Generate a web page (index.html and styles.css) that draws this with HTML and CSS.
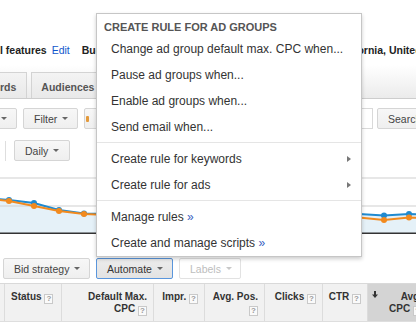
FILE: index.html
```html
<!DOCTYPE html>
<html>
<head>
<meta charset="utf-8">
<link rel="stylesheet" href="styles.css">
</head>
<body>
<div class="page">
  <div class="top-space"></div>
  <div class="info">
    <span class="strong">l features</span>
    <span class="link">Edit</span>
    <span class="strong budget">Budget: $50.00/day</span>
    <span class="strong location">Location: California, United States</span>
  </div>
  <div class="tabbar">
    <div class="tab tab-first">rds</div>
    <div class="tab tab-second">Audiences</div>
  </div>
  <div class="toolbar">
    <div class="btn btn-first"><span class="caret"></span></div>
    <div class="btn btn-filter">Filter<span class="caret"></span></div>
    <div class="btn btn-cols"><span class="col-icon"></span>Columns<span class="caret"></span></div>
    <div class="spacer"></div>
    <div class="search-input"></div>
    <div class="btn search-btn">Search</div>
  </div>
  <div class="toolbar2">
    <div class="vsep"></div>
    <div class="btn btn-daily">Daily<span class="caret"></span></div>
  </div>
  <svg class="chart" width="416" height="64" viewBox="0 0 416 64">
    <rect x="0" y="5.5" width="416" height="1" fill="#cfcfcf"/>
    <polygon fill="#e5f1f8" points="-16,26 9,28 34,31 59,38 84,41.5 109,42 134,40 159,41 184,39 209,40 234,41 259,42 284,40 309,41 334,42 359,42 384,43.5 409,42 434,43 434,61 -16,61"/>
    <rect x="0" y="33.5" width="416" height="1" fill="#cfcfcf"/>
    <rect x="0" y="60.5" width="416" height="1.5" fill="#333"/>
    <polyline fill="none" stroke="#1f8ad0" stroke-width="2" points="-16,26 9,28 34,31 59,38 84,41.5 109,42 134,40 159,41 184,39 209,40 234,41 259,42 284,40 309,41 334,42 359,42 384,43.5 409,42 434,43"/>
    <g fill="#1f8ad0">
      <circle cx="9" cy="28" r="3"/><circle cx="34" cy="31" r="3"/><circle cx="59" cy="38" r="3"/><circle cx="84" cy="41.5" r="3"/><circle cx="384" cy="43.5" r="3"/><circle cx="409" cy="42" r="3"/>
    </g>
    <polyline fill="none" stroke="#f28a1e" stroke-width="2" points="-16,26.5 9,29 34,34 59,39 84,42 109,43 134,42 159,43 184,41 209,42 234,43 259,44 284,42 309,44 334,45 359,45.5 384,48 409,45.5 434,46"/>
    <g fill="#f28a1e">
      <circle cx="9" cy="29" r="3"/><circle cx="34" cy="34" r="3"/><circle cx="59" cy="39" r="3"/><circle cx="84" cy="42" r="3"/><circle cx="384" cy="48" r="3"/><circle cx="409" cy="45.5" r="3"/>
    </g>
  </svg>
  <div class="toolbar3">
    <div class="btn btn-bid">Bid strategy<span class="caret"></span></div>
    <div class="btn btn-active">Automate<span class="caret"></span></div>
    <div class="btn btn-disabled">Labels<span class="caret"></span></div>
  </div>
  <div class="thead">
    <div class="th th-check"></div>
    <div class="th th-left">Status <span class="help">?</span></div>
    <div class="th">Default Max.<br>CPC <span class="help">?</span></div>
    <div class="th">Impr. <span class="help">?</span></div>
    <div class="th">Avg. Pos.<br><span class="help">?</span></div>
    <div class="th">Clicks <span class="help">?</span></div>
    <div class="th">CTR <span class="help">?</span></div>
    <div class="th th-sorted"><svg class="sort-arrow" width="6" height="7" viewBox="0 0 6 7"><rect x="2" y="0" width="2" height="4" fill="#333"/><polygon points="0,3.5 6,3.5 3,7" fill="#333"/></svg>Avg.<br>CPC <span class="help">?</span></div>
  </div>
</div>

<div class="menu">
  <div class="menu-header">CREATE RULE FOR AD GROUPS</div>
  <div class="menu-item">Change ad group default max. CPC when...</div>
  <div class="menu-item">Pause ad groups when...</div>
  <div class="menu-item">Enable ad groups when...</div>
  <div class="menu-item">Send email when...</div>
  <div class="menu-sep"></div>
  <div class="menu-item">Create rule for keywords<span class="sub-arrow"></span></div>
  <div class="menu-item">Create rule for ads<span class="sub-arrow"></span></div>
  <div class="menu-sep"></div>
  <div class="menu-item">Manage rules <span class="raquo">»</span></div>
  <div class="menu-item">Create and manage scripts <span class="raquo">»</span></div>
</div>
</body>
</html>
```
FILE: styles.css
```css
html, body {
  margin: 0;
  padding: 0;
}
body {
  width: 416px;
  height: 327px;
  overflow: hidden;
  position: relative;
  background: #fff;
  font-family: Arial, "Liberation Sans", sans-serif;
  font-size: 10.5px;
  color: #333;
}
.page {
  width: 416px;
}
.top-space {
  height: 43px;
}
.info {
  display: flex;
  white-space: nowrap;
  height: 14px;
  line-height: 14px;
}
.info span {
  flex-shrink: 0;
}
.strong {
  font-weight: bold;
  color: #222;
}
.link {
  color: #1155cc;
  margin-left: 5px;
}
.budget {
  margin-left: 12px;
}
.location {
  margin-left: 107px;
}
.tabbar {
  margin-top: 2px;
  height: 39px;
  border-bottom: 1px solid #cdcdcd;
  background: linear-gradient(#ffffff 15%, #ebebeb);
  display: flex;
  align-items: flex-end;
  gap: 4px;
}
.tab {
  box-sizing: border-box;
  height: 26px;
  padding: 7px 10px 0 9px;
  line-height: 14px;
  border: 1px solid #d3d3d3;
  border-bottom: none;
  background: linear-gradient(#f3f3f3, #e9e9e9);
  font-weight: bold;
  color: #555;
  white-space: nowrap;
  flex-shrink: 0;
}
.tab-first {
  border-left: none;
  padding-left: 0;
}
.tab-second {
  width: 90px;
}
.toolbar, .toolbar2, .toolbar3 {
  display: flex;
  align-items: center;
  white-space: nowrap;
}
.toolbar {
  margin-top: 9px;
}
.toolbar2 {
  margin-top: 11px;
}
.toolbar3 {
  margin-top: 22px;
  padding-left: 3px;
  gap: 6px;
}
.btn {
  box-sizing: border-box;
  display: flex;
  align-items: center;
  flex-shrink: 0;
  height: 21px;
  padding: 0 10px;
  border: 1px solid #d5d5d5;
  border-radius: 2px;
  background: linear-gradient(#f7f7f7, #efefef);
  color: #444;
}
.caret {
  display: inline-block;
  width: 0;
  height: 0;
  margin-left: 5px;
  border-left: 3px solid transparent;
  border-right: 3px solid transparent;
  border-top: 3px solid #666;
}
.btn-first {
  margin-left: -8px;
  padding: 0 9px 0 8px;
}
.btn-first .caret {
  margin-left: 0;
}
.btn-filter {
  margin-left: 6px;
  width: 55px;
}
.btn-cols {
  margin-left: 6px;
  padding-left: 1px;
}
.col-icon {
  display: inline-block;
  width: 3px;
  height: 6px;
  border-radius: 1px;
  background: #e39a3c;
  margin-right: 14px;
}
.spacer {
  flex: 1;
}
.search-input {
  flex-shrink: 0;
  box-sizing: border-box;
  width: 120px;
  height: 21px;
  border: 1px solid #d9d9d9;
  background: #fff;
}
.search-btn {
  margin-left: 4px;
  margin-right: -21px;
  width: 60px;
}
.vsep {
  width: 1px;
  height: 20px;
  margin-left: 5px;
  background: #dedede;
}
.btn-daily {
  margin-left: 8px;
  width: 56px;
}
.chart {
  display: block;
  margin-top: 11px;
}
.btn-bid {
  width: 87px;
}
.btn-active {
  width: 77px;
  border-color: #5a96dc;
  background: linear-gradient(#ececec, #e3e3e3);
  color: #333;
}
.btn-disabled {
  width: 62px;
  background: #fff;
  border-color: #e2e2e2;
  color: #bdbdbd;
}
.btn-disabled .caret {
  border-top-color: #c8c8c8;
}
.thead {
  margin-top: 4px;
  display: grid;
  grid-template-columns: 4px 57px 92px 51px 60px 58px 45px 61px;
  width: max-content;
  border-top: 1px solid #d9d9d9;
  border-bottom: 1px solid #dedede;
  background: #f1f1f1;
  font-size: 10px;
  font-weight: bold;
  line-height: 12px;
  color: #333;
}
.th {
  height: 37px;
  box-sizing: border-box;
  padding: 7px 6px 0 3px;
  text-align: right;
  border-left: 1px solid #dcdcdc;
  white-space: nowrap;
}
.th-check {
  border-left: none;
  padding: 0;
}
.th-left {
  text-align: left;
  padding-left: 6px;
}
.th-sorted {
  background: #d4d4d4;
  padding-left: 4px;
}
.sort-arrow {
  float: left;
  margin-top: 0;
}
.help {
  display: inline-block;
  box-sizing: border-box;
  width: 9px;
  height: 10px;
  border: 1px solid #c9c9c9;
  background: #fafafa;
  color: #9a9a9a;
  font-size: 8px;
  line-height: 8px;
  text-align: center;
  font-weight: bold;
  vertical-align: -1px;
}
.menu {
  position: absolute;
  left: 96px;
  top: 13px;
  width: 264px;
  background: #fff;
  border: 1px solid #c6c6c6;
  box-shadow: 0 2px 4px rgba(0, 0, 0, 0.2);
  font-size: 12px;
  color: #333;
}
.menu-header {
  padding: 6px 0 2px 7px;
  line-height: 14px;
  font-size: 11px;
  font-weight: bold;
  color: #555;
}
.menu-item {
  position: relative;
  height: 26px;
  line-height: 26px;
  padding-left: 14px;
  white-space: nowrap;
}
.menu-sep {
  height: 1px;
  background: #e5e5e5;
  margin: 2px 0 3px;
}
.sub-arrow {
  position: absolute;
  right: 10px;
  top: 10px;
  width: 0;
  height: 0;
  border-left: 4px solid #777;
  border-top: 3px solid transparent;
  border-bottom: 3px solid transparent;
}
.raquo {
  color: #3a5fbf;
}
```
